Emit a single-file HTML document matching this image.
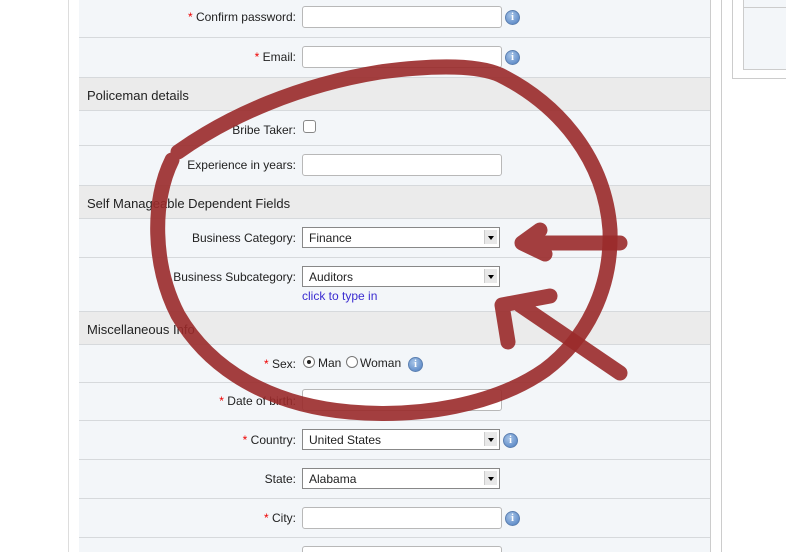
<!DOCTYPE html>
<html style="width:786px;height:552px;overflow:hidden"><head><meta charset="utf-8"><style>
body{margin:0;width:786px;height:552px;background:#fff;position:relative;overflow:hidden;font-family:"Liberation Sans",Verdana,sans-serif;font-size:12px;color:#222}
.a{position:absolute}
.row{position:absolute;left:79px;width:631px;background:#f3f6f9;border-bottom:1px solid #d6d9dc;overflow:hidden}
.sec{position:absolute;left:79px;width:631px;background:#ebebeb;border-bottom:1px solid #d6d9dc;font-size:13px}
.sec span{position:absolute;left:8px}
.lbl{position:absolute;right:414px;text-align:right;white-space:nowrap}
.st{color:#e00}
.in{position:absolute;left:223px;width:198px;height:20px;background:#fff;border:1px solid #b8b8b8;border-radius:3px}
.sel{position:absolute;left:223px;width:196px;height:19px;background:#fff;border:1px solid #888;}
.sel span{position:absolute;left:6px;top:3px}
.sel i{position:absolute;right:2px;top:2px;width:12px;height:14px;background:#e8e8e8;border-left:1px solid #ccc}
.sel i:after{content:"";position:absolute;left:3px;top:6px;border:3px solid transparent;border-top:4px solid #000}
.ic{position:absolute;left:426px;width:13px;height:13px;border-radius:50%;background:radial-gradient(circle at 40% 35%,#a9c6e8,#4b7cc0);border:1px solid #5b7fb0;color:#fff;font:bold 10px "Liberation Serif",serif;text-align:center;line-height:13px}
</style></head><body>
<div class="a" style="left:68px;top:0;width:1px;height:552px;background:#ddd"></div>
<div class="a" style="left:710px;top:0;width:1px;height:552px;background:#ccc"></div>
<div class="a" style="left:721px;top:0;width:1px;height:552px;background:#ccc"></div>
<div class="a" style="left:732px;top:-2px;width:60px;height:80px;border:1px solid #ccc;border-top:none"></div>
<div class="a" style="left:743px;top:-2px;width:50px;height:70px;border:1px solid #ccc;background:#f3f6f9"></div>
<div class="a" style="left:743px;top:7px;width:50px;height:1px;background:#ccc"></div>

<div class="row" style="top:0;height:37px"><div class="lbl" style="top:10px"><span class="st">*</span> Confirm password:</div><div class="in" style="top:6px"></div><div class="ic" style="top:10px">i</div></div>
<div class="row" style="top:38px;height:39px"><div class="lbl" style="top:12px"><span class="st">*</span> Email:</div><div class="in" style="top:8px"></div><div class="ic" style="top:12px">i</div></div>
<div class="sec" style="top:78px;height:32px"><span style="top:10px">Policeman details</span></div>
<div class="row" style="top:111px;height:34px"><div class="lbl" style="top:12px">Bribe Taker:</div><div class="a" style="left:224px;top:9px;width:11px;height:11px;border:1px solid #888;border-radius:3px;background:#fff"></div></div>
<div class="row" style="top:146px;height:39px"><div class="lbl" style="top:12px">Experience in years:</div><div class="in" style="top:8px"></div></div>
<div class="sec" style="top:186px;height:32px"><span style="top:10px">Self Manageable Dependent Fields</span></div>
<div class="row" style="top:219px;height:38px"><div class="lbl" style="top:12px">Business Category:</div><div class="sel" style="top:8px"><span>Finance</span><i></i></div></div>
<div class="row" style="top:258px;height:53px"><div class="lbl" style="top:12px">Business Subcategory:</div><div class="sel" style="top:8px"><span>Auditors</span><i></i></div><div class="a" style="left:223px;top:31px;color:#3a2bd0">click to type in</div></div>
<div class="sec" style="top:312px;height:32px"><span style="top:10px">Miscellaneous Info</span></div>
<div class="row" style="top:345px;height:37px"><div class="lbl" style="top:12px"><span class="st">*</span> Sex:</div>
<div class="a" style="left:224px;top:11px;width:10px;height:10px;border:1px solid #777;border-radius:50%;background:#fff"><div class="a" style="left:3px;top:3px;width:4px;height:4px;border-radius:50%;background:#222"></div></div><div class="a" style="left:239px;top:11px">Man</div>
<div class="a" style="left:267px;top:11px;width:10px;height:10px;border:1px solid #777;border-radius:50%;background:#fff"></div><div class="a" style="left:281px;top:11px">Woman</div><div class="ic" style="left:329px;top:12px">i</div></div>
<div class="row" style="top:383px;height:37px"><div class="lbl" style="top:11px"><span class="st">*</span> Date of birth:</div><div class="in" style="top:6px"></div></div>
<div class="row" style="top:421px;height:38px"><div class="lbl" style="top:12px"><span class="st">*</span> Country:</div><div class="sel" style="top:8px"><span>United States</span><i></i></div><div class="ic" style="left:424px;top:12px">i</div></div>
<div class="row" style="top:460px;height:38px"><div class="lbl" style="top:12px">State:</div><div class="sel" style="top:8px"><span>Alabama</span><i></i></div></div>
<div class="row" style="top:499px;height:38px"><div class="lbl" style="top:12px"><span class="st">*</span> City:</div><div class="in" style="top:8px"></div><div class="ic" style="top:12px">i</div></div>
<div class="row" style="top:538px;height:14px;border:none"><div class="in" style="top:8px"></div></div>

<svg class="a" style="left:0;top:0" width="786" height="552"><g fill="none" stroke="#9a2a2a" stroke-opacity="0.9" stroke-width="15" stroke-linecap="round" stroke-linejoin="round">
<path d="M178,152 C230,115 300,85 380,72 C440,64 480,66 500,75 C560,105 605,160 610,230 C612,290 585,340 545,370 C495,405 420,418 350,412 C270,405 210,370 178,315 C152,265 152,200 172,160"/>
<path d="M620,243 L525,243 M540,230 L522,243 L545,254"/>
<path d="M620,373 L520,305 M508,342 L502,305 L550,296"/>
</g></svg>
</body></html>
